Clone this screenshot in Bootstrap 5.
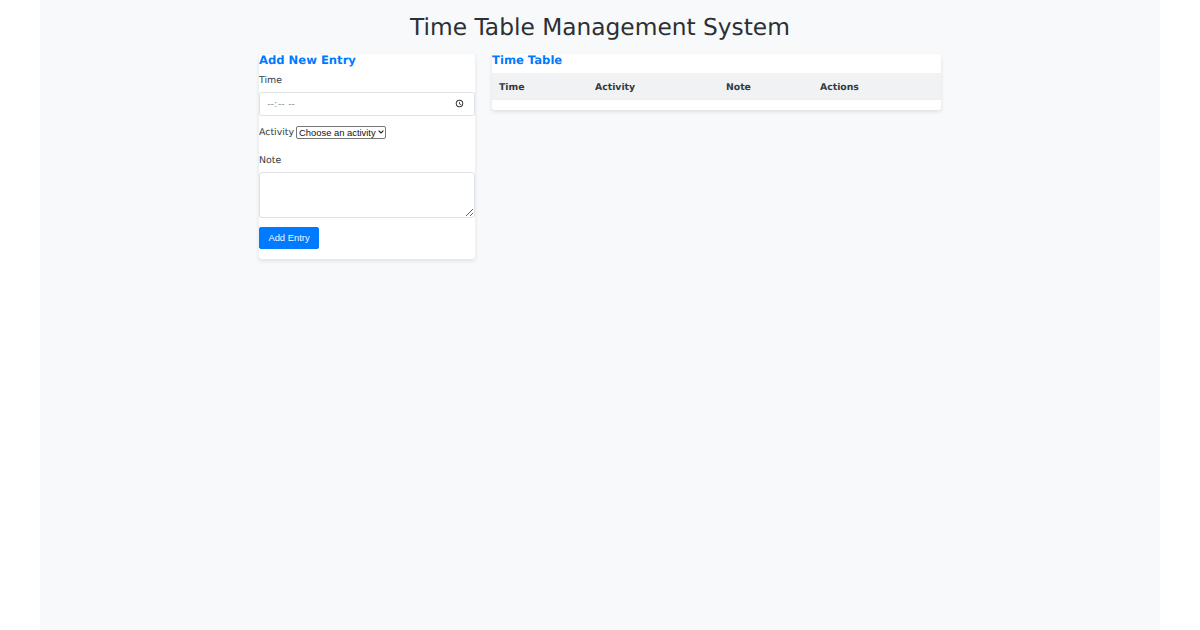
<!DOCTYPE html>
<html lang="en">
<head>
<meta charset="utf-8">
<title>Time Table Management System</title>
<link href="https://cdn.jsdelivr.net/npm/bootstrap@5.3.0/dist/css/bootstrap.min.css" rel="stylesheet">
<style>
html, body { height: 100%; }
body { background: #fff; font-family: "DejaVu Sans", sans-serif; overflow: hidden; text-rendering: geometricPrecision; }
.page-wrap { width: 1120px; height: 630px; margin: 0 auto; background: #f8f9fa; padding-top: 11px; }
.page-title { font-size: 23.3px; font-weight: 400; line-height: 34px; margin: 0 0 9px; color: #2b3035; }
.panes { gap: 17px; }
.pane { background: #fff; border-radius: 3px; box-shadow: 0 2px 4px rgba(0,0,0,.1); }
.pane-form { width: 216px; height: 205px; }
.pane-table { width: 449px; height: 56px; }
.pane-title { color: #007bff; font-size: 11.6px; font-weight: 700; line-height: 12px; margin: 0; }
.field-label { font-size: 9.4px; line-height: 14px; padding-top: 2px; color: #343a40; margin: 0; display: block; }
.label-time { margin-top: 6px; }
.time-field { display: block; zoom: .8; width: 270px; height: 30px; font-size: 11.75px; padding: 0 9px; border: 1px solid #dee2e6; border-radius: 3px; color: #868e96; margin-top: 5px; background: #fff; }
.entry-row { margin-top: 8px; gap: 2px; }
.activity-field { appearance: none; width: 90px; height: 13px; padding: 0 0 0 2px; font-family: "Liberation Sans", sans-serif; font-size: 9.4px; line-height: 11px; color: #111; border: 1px solid #767676; border-radius: 2px;
  background: #fff url("data:image/svg+xml,%3Csvg xmlns='http://www.w3.org/2000/svg' width='6' height='4' viewBox='0 0 6 4'%3E%3Cpath d='M.6.6 3 3 5.4.6' fill='none' stroke='%23222' stroke-width='1.1'/%3E%3C/svg%3E") no-repeat right 1px center; }
.label-note { margin-top: 12px; }
.note-field { display: block; width: 100%; height: 46px; border: 1px solid #dee2e6; border-radius: 3px; margin-top: 4px; background: #fff; }
.add-btn { display: block; margin-top: 9px; width: 60px; height: 22px; padding: 0; font-family: "Liberation Sans", sans-serif; font-size: 9.4px; line-height: 14px; color: #f2f8ff; background: #007bff; border: 1px solid #007bff; border-radius: 2px; }
.grid-table { width: 100%; border-collapse: collapse; margin-top: 7px; }
.grid-table th { background: #f1f2f4; font-size: 9.3px; line-height: 16px; font-weight: 700; color: #343a40; padding: 7px 7px 3px; border-bottom: 1px solid #eceef0; }
.w-time { width: 96px; } .w-act { width: 131px; } .w-note { width: 94px; }
</style>
</head>
<body>
<div class="page-wrap">
  <h1 class="page-title text-center">Time Table Management System</h1>
  <div class="d-flex justify-content-center align-items-start panes">
    <section class="pane pane-form">
      <h2 class="pane-title">Add New Entry</h2>
      <form>
        <label class="field-label label-time" for="t">Time</label>
        <input id="t" class="time-field" type="time">
        <div class="d-flex align-items-center entry-row">
          <label class="field-label" for="a">Activity</label>
          <select id="a" class="activity-field"><option>Choose an activity</option></select>
        </div>
        <label class="field-label label-note" for="n">Note</label>
        <textarea id="n" class="note-field"></textarea>
        <button type="button" class="add-btn">Add Entry</button>
      </form>
    </section>
    <section class="pane pane-table">
      <h2 class="pane-title">Time Table</h2>
      <table class="grid-table">
        <thead><tr><th class="w-time">Time</th><th class="w-act">Activity</th><th class="w-note">Note</th><th>Actions</th></tr></thead>
        <tbody></tbody>
      </table>
    </section>
  </div>
</div>
<script src="https://cdn.jsdelivr.net/npm/bootstrap@5.3.0/dist/js/bootstrap.bundle.min.js"></script>
</body>
</html>
